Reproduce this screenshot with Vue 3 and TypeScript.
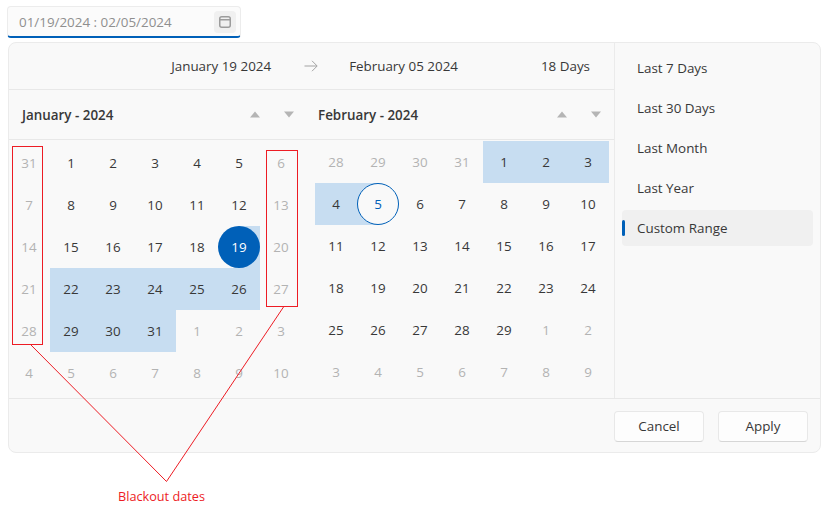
<script setup lang="ts">
interface Day {
  label: number
  muted?: boolean
  range?: boolean
  start?: boolean
  end?: boolean
}

function seq(from: number, to: number, extra: Partial<Day> = {}): Day[] {
  const out: Day[] = []
  for (let i = from; i <= to; i++) out.push({ label: i, ...extra })
  return out
}

const january: Day[] = [
  { label: 31, muted: true },
  ...seq(1, 5),
  { label: 6, muted: true },
  { label: 7, muted: true },
  ...seq(8, 12),
  { label: 13, muted: true },
  { label: 14, muted: true },
  ...seq(15, 18),
  { label: 19, start: true },
  { label: 20, muted: true },
  { label: 21, muted: true },
  ...seq(22, 26, { range: true }),
  { label: 27, muted: true },
  { label: 28, muted: true },
  ...seq(29, 31, { range: true }),
  ...seq(1, 3, { muted: true }),
  ...seq(4, 10, { muted: true }),
]

const february: Day[] = [
  ...seq(28, 31, { muted: true }),
  ...seq(1, 3, { range: true }),
  { label: 4, range: true },
  { label: 5, end: true },
  ...seq(6, 29),
  ...seq(1, 2, { muted: true }),
  ...seq(3, 9, { muted: true }),
]

const calendars = [
  { title: 'January - 2024', days: january },
  { title: 'February - 2024', days: february },
]

const presets = ['Last 7 Days', 'Last 30 Days', 'Last Month', 'Last Year', 'Custom Range']
</script>

<template>
  <div class="page">
    <div class="input">
      <span class="input__text">01/19/2024 : 02/05/2024</span>
      <span class="input__btn">
        <svg width="14" height="14" viewBox="0 0 14 14" fill="none" stroke="#9c9c9c" stroke-width="1.5">
          <rect x="1.75" y="1.75" width="10.5" height="10.5" rx="2" />
          <path d="M1.75 4.75h10.5" />
        </svg>
      </span>
    </div>

    <div class="popup">
      <div class="popup__main">
        <div class="panes">
          <div class="summary">
            <span>January 19 2024</span>
            <svg class="summary__arrow" width="14" height="12" viewBox="0 0 14 12" fill="none" stroke="#a3a3a3" stroke-width="1">
              <path d="M0.5 6h12.5M8 0.8L13.2 6L8 11.2" />
            </svg>
            <span>February 05 2024</span>
            <span class="summary__days">18 Days</span>
          </div>

          <div class="months">
            <div v-for="(cal, c) in calendars" :key="cal.title" class="cal" :class="'cal--' + c">
              <div class="cal__head">
                <span class="cal__title">{{ cal.title }}</span>
                <span class="cal__nav">
                  <svg width="10" height="7" viewBox="0 0 10 7"><path d="M5 0.5L10 6.5H0z" fill="#b5b5b5" /></svg>
                  <svg width="10" height="7" viewBox="0 0 10 7"><path d="M0 0.5H10L5 6.5z" fill="#b5b5b5" /></svg>
                </span>
              </div>
              <div class="cal__grid">
                <div
                  v-for="(d, i) in cal.days"
                  :key="i"
                  class="day"
                  :class="{
                    'day--muted': d.muted,
                    'day--range': d.range,
                    'day--start': d.start,
                    'day--end': d.end,
                  }"
                >
                  <span class="day__label">{{ d.label }}</span>
                </div>
              </div>
            </div>
          </div>
        </div>

        <ul class="side">
          <li
            v-for="p in presets"
            :key="p"
            class="side__item"
            :class="{ 'side__item--active': p === 'Custom Range' }"
          >
            {{ p }}
          </li>
        </ul>
      </div>

      <div class="popup__footer">
        <button class="btn">Cancel</button>
        <button class="btn">Apply</button>
      </div>
    </div>

    <svg class="marks" width="827" height="515" viewBox="0 0 827 515" fill="none" stroke="#ed1c24" stroke-width="1">
      <rect x="12.5" y="146.5" width="30" height="198" />
      <rect x="266.5" y="150.5" width="31" height="156" />
      <path d="M31 345L166.5 481.5L283.5 307" />
    </svg>
    <div class="marks__label">Blackout dates</div>
  </div>
</template>

<style>
html, body {
  margin: 0;
  background: #ffffff;
}
</style>

<style scoped>
.page {
  position: relative;
  width: 827px;
  height: 515px;
  padding: 6px 0 0 7px;
  box-sizing: border-box;
  overflow: hidden;
  font-family: "Open Sans", "Noto Sans", sans-serif;
  font-size: 13.4px;
  color: #383838;
}

.input {
  width: 234px;
  height: 32px;
  box-sizing: border-box;
  padding: 0 4px 0 11px;
  display: flex;
  align-items: center;
  justify-content: space-between;
  background: #fbfbfb;
  border: 1px solid #ececec;
  border-bottom: 2px solid #0060b8;
  border-radius: 4px;
}

.input__text {
  color: #8f8f8f;
}

.input__btn {
  width: 22px;
  height: 22px;
  display: flex;
  align-items: center;
  justify-content: center;
  background: #f0f0f0;
  border-radius: 4px;
}

.popup {
  margin: 4px 0 0 1px;
  width: 813px;
  height: 411px;
  box-sizing: border-box;
  display: flex;
  flex-direction: column;
  background: #f9f9f9;
  border: 1px solid #ebebeb;
  border-radius: 8px;
}

.popup__main {
  flex: 1;
  display: flex;
  min-height: 0;
}

.panes {
  width: 605px;
  flex: none;
  border-right: 1px solid #ebebeb;
}

.summary {
  height: 46px;
  padding-right: 24px;
  display: flex;
  align-items: center;
  justify-content: flex-end;
  border-bottom: 1px solid #e8e8e8;
}

.summary__arrow {
  margin: 0 31px 0 33px;
}

.summary__days {
  margin-left: 83px;
}

.months {
  display: flex;
}

.cal {
  flex: none;
}

.cal--0 {
  width: 294px;
}

.cal--1 {
  width: 311px;
}

.cal__head {
  height: 49px;
  display: flex;
  align-items: center;
  justify-content: space-between;
  border-bottom: 1px solid #e8e8e8;
}

.cal--0 .cal__head {
  padding: 0 9px 0 13px;
}

.cal--1 .cal__head {
  padding: 0 13px 0 15px;
}

.cal__title {
  font-weight: 600;
}

.cal__nav {
  display: flex;
  align-items: center;
  gap: 24px;
}

.cal__grid {
  display: grid;
  grid-template-columns: repeat(7, 42px);
  grid-auto-rows: 42px;
}

.cal--0 .cal__grid {
  margin: 2px 0 0 -1px;
}

.cal--1 .cal__grid {
  margin: 1px 0 0 12px;
}

.day {
  display: flex;
  align-items: center;
  justify-content: center;
  box-sizing: border-box;
}

.day--muted {
  color: #b3b3b3;
}

.day--range {
  background: #c7ddf1;
}

.day--start {
  color: #ffffff;
  background: linear-gradient(to right, transparent 50%, #c7ddf1 50%);
}

.day--start .day__label {
  width: 42px;
  height: 42px;
  display: flex;
  align-items: center;
  justify-content: center;
  background: #0060b8;
  border-radius: 50%;
}

.day--end {
  color: #0060b8;
  background: linear-gradient(to right, #c7ddf1 50%, transparent 50%);
}

.day--end .day__label {
  width: 42px;
  height: 42px;
  box-sizing: border-box;
  display: flex;
  align-items: center;
  justify-content: center;
  background: #f9f9f9;
  border: 1px solid #0060b8;
  border-radius: 50%;
}

.side {
  flex: 1;
  margin: 0;
  padding: 7px 7px 0 7px;
  list-style: none;
  display: flex;
  flex-direction: column;
  gap: 4px;
}

.side__item {
  position: relative;
  height: 36px;
  padding-left: 15px;
  display: flex;
  align-items: center;
  border-radius: 4px;
}

.side__item--active {
  background: #f0f0f0;
}

.side__item--active::before {
  content: '';
  position: absolute;
  left: 0;
  top: 10px;
  width: 3px;
  height: 16px;
  background: #0060b8;
  border-radius: 2px;
}

.popup__footer {
  height: 54px;
  flex: none;
  box-sizing: border-box;
  padding: 12px 12px 0 0;
  display: flex;
  justify-content: flex-end;
  gap: 14px;
  border-top: 1px solid #e8e8e8;
}

.btn {
  width: 90px;
  height: 31px;
  padding: 0 0 2px;
  font: inherit;
  color: #383838;
  background: #fdfdfd;
  border: 1px solid #e8e8e8;
  border-bottom-color: #d6d6d6;
  border-radius: 4px;
}

.marks {
  position: absolute;
  left: 0;
  top: 0;
  pointer-events: none;
}

.marks__label {
  position: absolute;
  left: 118px;
  top: 487px;
  font-size: 12.7px;
  line-height: 18px;
  color: #ed1c24;
}
</style>
